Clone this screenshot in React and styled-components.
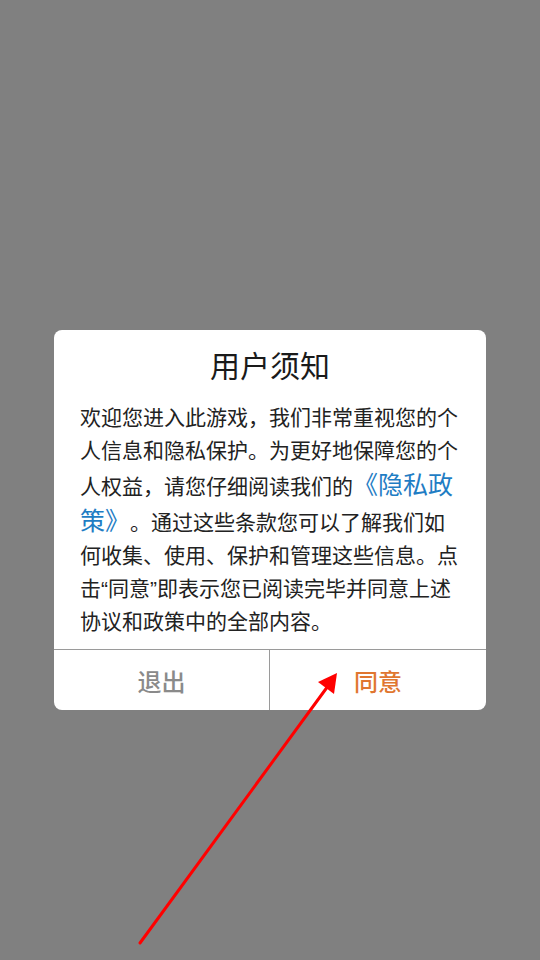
import React from 'react'
import styled, { createGlobalStyle } from 'styled-components'

const GlobalStyle = createGlobalStyle`
	html, body {
		margin: 0;
		padding: 0;
		background: #808080;
	}
	body {
		font-family: 'Liberation Sans', 'Noto Sans CJK SC', sans-serif;
		text-spacing-trim: space-all;
	}
`

const App = () => {
	return (
		<>
			<GlobalStyle />
			<StyledBackdrop>
				<StyledDialog>
					<StyledTitle>用户须知</StyledTitle>
					<StyledBody>
						欢迎您进入此游戏，我们非常重视您的个人信息和隐私保护。为更好地保障您的个人权益，请您仔细阅读我们的
						<StyledLink>《隐私政策》</StyledLink>
						。通过这些条款您可以了解我们如何收集、使用、保护和管理这些信息。点击“同意”即表示您已阅读完毕并同意上述协议和政策中的全部内容。
					</StyledBody>
					<StyledFooter>
						<StyledButton>退出</StyledButton>
						<StyledButton primary>同意</StyledButton>
					</StyledFooter>
				</StyledDialog>
				<StyledArrow viewBox='0 0 540 960' width='540' height='960'>
					<line x1='140' y1='943' x2='328' y2='686' stroke='#f00' strokeWidth='3' strokeLinecap='round' />
					<polygon points='337,673 334,694 318,682' fill='#f00' />
				</StyledArrow>
			</StyledBackdrop>
		</>
	)
}

const StyledBackdrop = styled.div`
	position: relative;
	width: 540px;
	height: 960px;
	background: #808080;
	display: flex;
	flex-direction: column;
	align-items: center;
	padding-top: 330px;
	box-sizing: border-box;
	overflow: hidden;
`

const StyledDialog = styled.div`
	width: 432px;
	background: #fff;
	border-radius: 8px;
	overflow: hidden;
	display: flex;
	flex-direction: column;
	padding-top: 17px;
`

const StyledTitle = styled.div`
	font-size: 30px;
	line-height: 40px;
	text-align: center;
	color: #1a1a1a;
	margin-bottom: 14px;
`

const StyledBody = styled.div`
	padding: 0 26px 11px;
	font-size: 21px;
	line-height: 33px;
	color: #222;
	text-align: left;
	word-break: break-all;
	text-spacing-trim: space-all;
`

const StyledLink = styled.span`
	font-size: 25px;
	line-height: 36px;
	color: #1f7dc4;
`

const StyledFooter = styled.div`
	display: grid;
	grid-template-columns: 215px 1fr;
	border-top: 1px solid #9a9a9a;
	height: 60px;
`

const StyledButton = styled.div`
	display: flex;
	align-items: center;
	justify-content: center;
	font-size: 24px;
	font-weight: 500;
	color: ${props => (props.primary ? '#e0762f' : '#8a8a8a')};
	border-left: ${props => (props.primary ? '1px solid #9a9a9a' : 'none')};
`

const StyledArrow = styled.svg`
	position: absolute;
	left: 0;
	top: 0;
	pointer-events: none;
`

export default App
